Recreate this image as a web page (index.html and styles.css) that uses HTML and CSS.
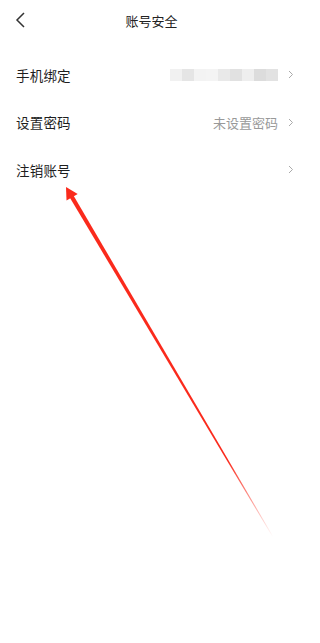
FILE: index.html
```html
<!DOCTYPE html>
<html lang="zh">
<head>
<meta charset="utf-8">
<link rel="stylesheet" href="styles.css">
</head>
<body>
<div class="page">
  <header class="header">
    <svg class="back" width="12" height="18" viewBox="0 0 12 18"><polyline points="9,1 2,8 9,15" fill="none" stroke="#333" stroke-width="1.5"/></svg>
    <div class="title">账号安全</div>
  </header>
  <div class="list">
    <div class="row">
      <span class="label">手机绑定</span>
      <span class="right">
        <span class="mosaic">
          <i class="m1"></i><i class="m2"></i><i class="m3"></i><i class="m4"></i><i class="m5"></i><i class="m6"></i><i class="m7"></i><i class="m8"></i><i class="m9"></i>
        </span>
        <svg class="chev" width="6" height="9" viewBox="0 0 6 9"><polyline points="1,1 4.5,4.5 1,8" fill="none" stroke="#aaa" stroke-width="1"/></svg>
      </span>
    </div>
    <div class="row">
      <span class="label">设置密码</span>
      <span class="right">
        <span class="value">未设置密码</span>
        <svg class="chev" width="6" height="9" viewBox="0 0 6 9"><polyline points="1,1 4.5,4.5 1,8" fill="none" stroke="#aaa" stroke-width="1"/></svg>
      </span>
    </div>
    <div class="row">
      <span class="label">注销账号</span>
      <span class="right">
        <svg class="chev" width="6" height="9" viewBox="0 0 6 9"><polyline points="1,1 4.5,4.5 1,8" fill="none" stroke="#aaa" stroke-width="1"/></svg>
      </span>
    </div>
  </div>
  <svg class="arrow" width="303" height="643" viewBox="0 0 303 643">
    <defs>
      <linearGradient id="fade" gradientUnits="userSpaceOnUse" x1="66" y1="187" x2="273" y2="537">
        <stop offset="0" stop-color="#fa2a1c" stop-opacity="1"/>
        <stop offset="0.78" stop-color="#fa2a1c" stop-opacity="1"/>
        <stop offset="1" stop-color="#fa2a1c" stop-opacity="0"/>
      </linearGradient>
    </defs>
    <polygon points="72.9,194.5 69.3,196.7 272.7,537.2 273.3,536.8" fill="url(#fade)"/>
    <polygon points="66,187 77.7,194 66.5,200.6" fill="#fa2a1c"/>
  </svg>
</div>
</body>
</html>
```

FILE: styles.css
```css
html, body {
  margin: 0;
  padding: 0;
  background: #fff;
}
.page {
  position: relative;
  width: 303px;
  height: 643px;
  overflow: hidden;
  font-family: "Noto Sans CJK SC", "Noto Sans", sans-serif;
}
.header {
  position: relative;
  height: 42px;
  display: flex;
  align-items: center;
  justify-content: center;
}
.back {
  position: absolute;
  left: 15px;
  top: 12px;
}
.title {
  font-size: 13px;
  color: #222;
  line-height: 18px;
}
.list {
  padding-top: 9px;
}
.row {
  height: 47.5px;
  display: flex;
  align-items: center;
  justify-content: space-between;
  padding: 0 9px 0 16px;
}
.label {
  font-size: 13.5px;
  color: #1e1e1e;
  letter-spacing: 0.2px;
}
.right {
  display: flex;
  align-items: center;
  gap: 10px;
}
.value {
  font-size: 13px;
  color: #999;
}
.chev {
  display: block;
}
.mosaic {
  display: flex;
  height: 12px;
  margin-top: 1px;
}
.mosaic i {
  display: block;
  width: 12px;
  height: 12px;
}
.m1 { background: #f1f1f1; }
.m2 { background: #e5e5e5; }
.m3 { background: #f3f3f3; }
.m4 { background: #f4f4f4; }
.m5 { background: #e9e9e9; }
.m6 { background: #e1e1e1; }
.m7 { background: #eeeeee; }
.m8 { background: #dcdcdc; }
.m9 { background: #e2e2e2; }
.arrow {
  position: absolute;
  left: 0;
  top: 0;
  pointer-events: none;
}
```
